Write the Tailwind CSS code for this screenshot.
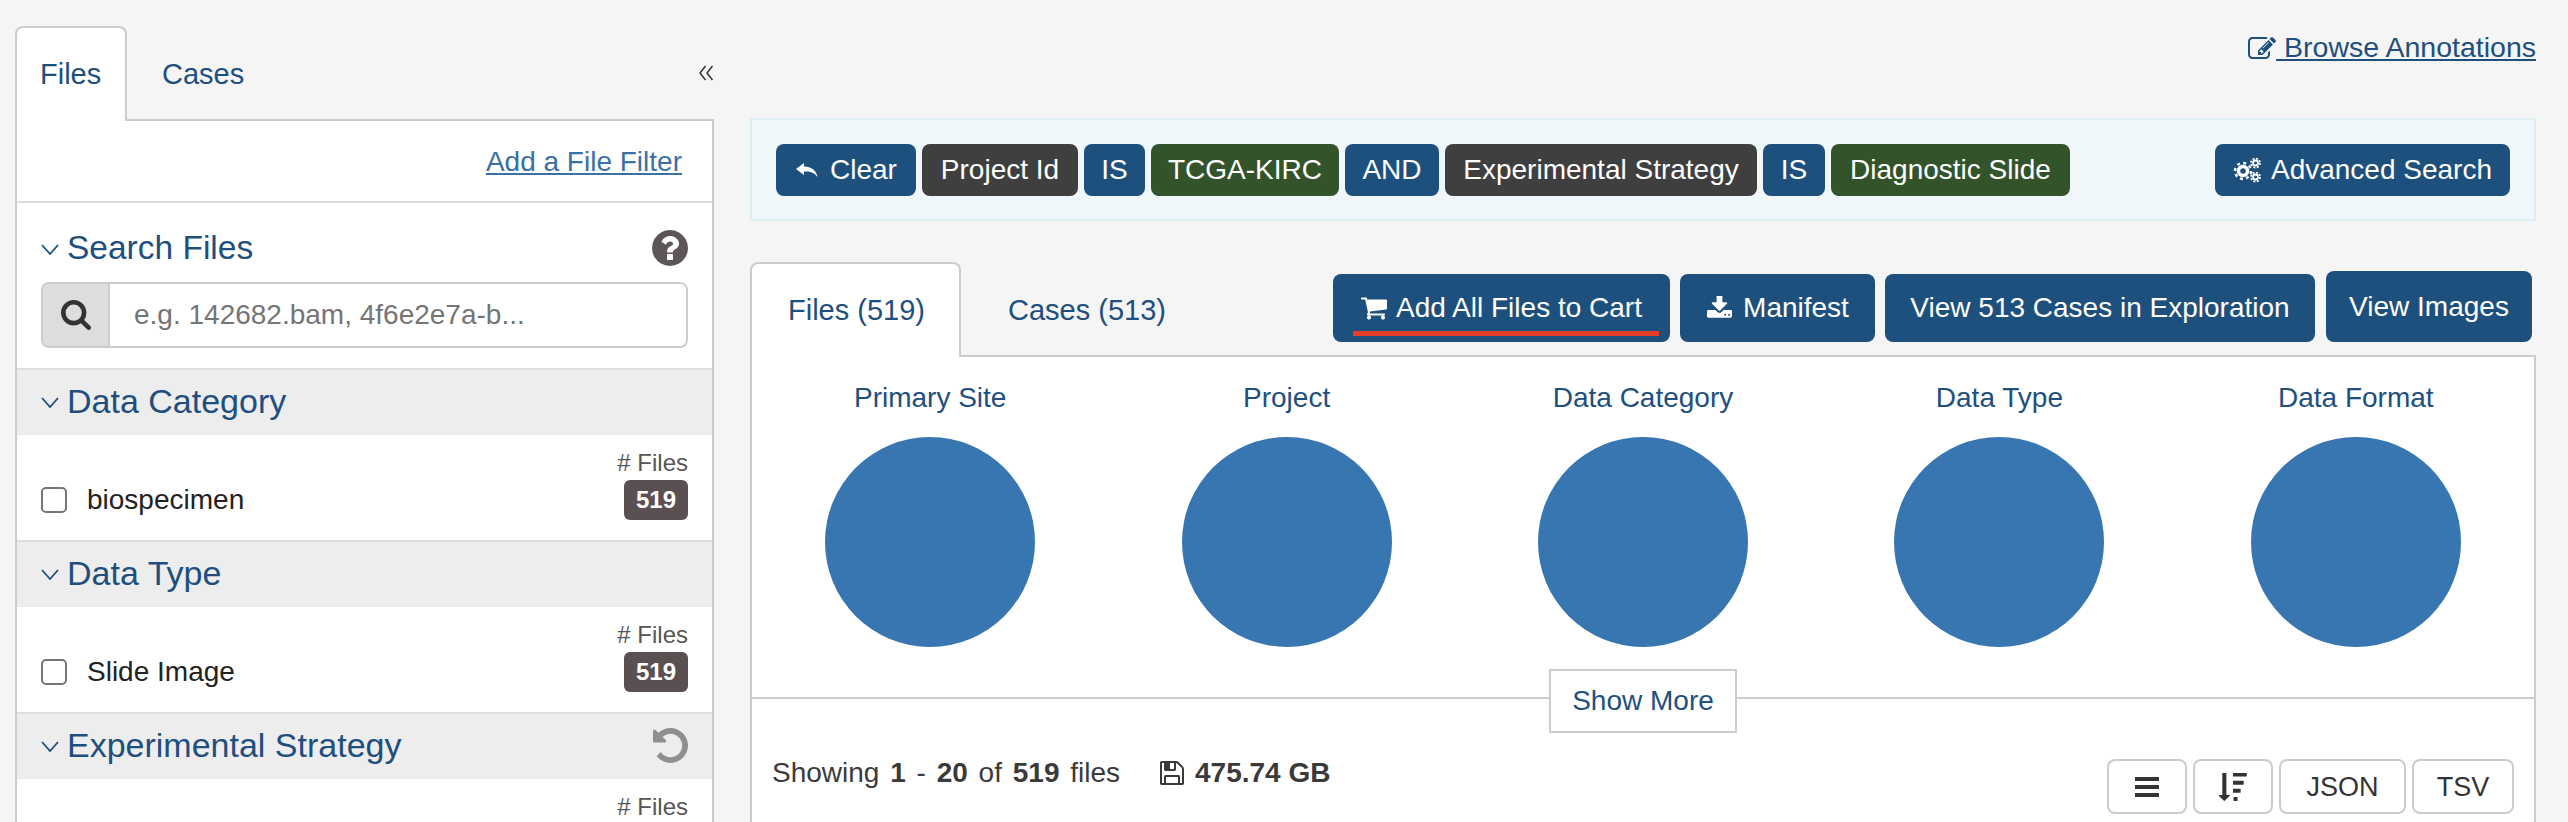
<!DOCTYPE html>
<html lang="en">
<head>
<meta charset="UTF-8">
<title>Repository</title>
<script src="https://cdn.jsdelivr.net/npm/@tailwindcss/browser@4"></script>
</head>
<body class="bg-[#f5f5f5] font-['Liberation_Sans',Arial,sans-serif] text-[28px] leading-[40px] text-[#333]">
<div class="flex h-[822px] w-[2568px] overflow-hidden">

  <!-- filters column -->
  <aside class="ml-[15px] mt-[26px] w-[699px] shrink-0">
    <div class="flex h-[95px] items-start text-[29px] text-[#1e4f7e]">
      <div class="relative z-10 h-[95px] w-[112px] rounded-t-lg border-2 border-b-0 border-[#ccc] bg-white pl-[23px] pt-[26px]">Files</div>
      <div class="pl-[35px] pt-[28px]">Cases</div>
      <svg class="ml-auto mt-[39px] h-[16px] w-[16px] text-[#333]" viewBox="0 0 16 16" fill="none" stroke="currentColor" stroke-width="1.500"><path d="M7.500 1 2 8 7.500 15M14.500 1 9 8 14.500 15"/></svg>
    </div>
    <div class="-mt-[2px] h-[720px] border-2 border-[#ccc] bg-white">
      <div class="flex h-[82px] justify-end border-b-2 border-[#ddd] pr-[30px] pt-[21px]">
        <a class="text-[#3a70a6] underline">Add a File Filter</a>
      </div>

      <section class="h-[165px] px-[24px] pt-[25px]">
        <div class="flex h-[40px] items-center">
          <svg class="mr-[8px] mt-[2px] h-[11px] w-[18px] text-[#1e4f7e]" viewBox="0 0 18 11" fill="none" stroke="currentColor" stroke-width="1.800"><path d="M1 1 9 10 17 1"/></svg>
          <h2 class="text-[33.500px] text-[#1e4f7e]">Search Files</h2>
          <svg class="ml-auto h-[36px] w-[36px] text-[#5d5557]" viewBox="128 128 1536 1536" fill="currentColor"><path d="M1024 1376v-192q0-14-9-23t-23-9h-192q-14 0-23 9t-9 23v192q0 14 9 23t23 9h192q14 0 23-9t9-23zm256-672q0-88-55.500-163t-138.500-116-170-41q-243 0-371 213-15 24 8 42l132 100q7 6 19 6 16 0 25-12 53-68 86-92 34-24 86-24 48 0 85.500 26t37.500 59q0 38-20 61t-68 45q-63 28-115.500 86.500t-52.500 125.500v36q0 14 9 23t23 9h192q14 0 23-9t9-23q0-19 21.500-49.500t54.500-49.500q32-18 49-28.500t46-35 44.500-48 28-60.500 12.500-81zm384 192q0 209-103 385.500t-279.500 279.500-385.500 103-385.500-103-279.500-279.500-103-385.500 103-385.500 279.500-279.500 385.500-103 385.500 103 279.500 279.500 103 385.500z"/></svg>
        </div>
        <div class="mt-[14px] flex h-[66px] overflow-hidden rounded-lg border-2 border-[#ccc]">
          <div class="flex w-[67px] items-center justify-center border-r-2 border-[#ccc] bg-[#ddd]">
            <svg class="h-[30px] w-[30px] text-[#333]" viewBox="64 128 1664 1664" fill="currentColor"><path d="M1216 832q0-185-131.500-316.500t-316.500-131.500-316.500 131.500-131.500 316.500 131.500 316.500 316.500 131.500 316.500-131.500 131.500-316.500zm512 832q0 52-38 90t-90 38q-54 0-90-38l-343-342q-179 124-399 124-143 0-273.500-55.500t-225-150-150-225-55.500-273.500 55.500-273.500 150-225 225-150 273.500-55.500 273.500 55.500 225 150 150 225 55.500 273.500q0 220-124 399l343 343q37 37 37 90z"/></svg>
          </div>
          <div class="flex flex-1 items-center bg-white pl-[24px] text-[#757575]">e.g. 142682.bam, 4f6e2e7a-b...</div>
        </div>
      </section>

      <section>
        <div class="flex h-[67px] items-center border-t-2 border-[#ddd] bg-[#ededed] px-[24px] pb-[3px]">
          <svg class="mr-[8px] mt-[2px] h-[11px] w-[18px] text-[#1e4f7e]" viewBox="0 0 18 11" fill="none" stroke="currentColor" stroke-width="1.800"><path d="M1 1 9 10 17 1"/></svg>
          <h2 class="text-[34px] text-[#1e4f7e]">Data Category</h2>
        </div>
        <div class="h-[105px] px-[24px] pt-[14px]">
          <div class="text-right text-[24px] leading-[28px] text-[#555]"># Files</div>
          <div class="mt-[3px] flex items-center">
            <input type="checkbox" class="h-[26px] w-[26px] appearance-none rounded-[5px] border-2 border-[#767676] bg-white">
            <span class="ml-[20px] text-[#222]">biospecimen</span>
            <span class="ml-auto flex h-[40px] w-[64px] items-center justify-center rounded-md bg-[#5a5051] text-[24px] font-bold text-white">519</span>
          </div>
        </div>
      </section>

      <section>
        <div class="flex h-[67px] items-center border-t-2 border-[#ddd] bg-[#ededed] px-[24px] pb-[3px]">
          <svg class="mr-[8px] mt-[2px] h-[11px] w-[18px] text-[#1e4f7e]" viewBox="0 0 18 11" fill="none" stroke="currentColor" stroke-width="1.800"><path d="M1 1 9 10 17 1"/></svg>
          <h2 class="text-[34px] text-[#1e4f7e]">Data Type</h2>
        </div>
        <div class="h-[105px] px-[24px] pt-[14px]">
          <div class="text-right text-[24px] leading-[28px] text-[#555]"># Files</div>
          <div class="mt-[3px] flex items-center">
            <input type="checkbox" class="h-[26px] w-[26px] appearance-none rounded-[5px] border-2 border-[#767676] bg-white">
            <span class="ml-[20px] text-[#222]">Slide Image</span>
            <span class="ml-auto flex h-[40px] w-[64px] items-center justify-center rounded-md bg-[#5a5051] text-[24px] font-bold text-white">519</span>
          </div>
        </div>
      </section>

      <section>
        <div class="flex h-[67px] items-center border-t-2 border-[#ddd] bg-[#ededed] px-[24px] pb-[3px]">
          <svg class="mr-[8px] mt-[2px] h-[11px] w-[18px] text-[#1e4f7e]" viewBox="0 0 18 11" fill="none" stroke="currentColor" stroke-width="1.800"><path d="M1 1 9 10 17 1"/></svg>
          <h2 class="text-[34px] text-[#1e4f7e]">Experimental Strategy</h2>
          <svg class="ml-auto h-[35px] w-[35px] text-[#8f8f8f]" viewBox="128 128 1536 1536" fill="currentColor"><path d="M1664 896q0 156-61 298t-164 245-245 164-298 61q-172 0-327-72.500t-264-204.500q-7-10-6.500-22.500t8.500-20.500l137-138q10-9 25-9 16 2 23 12 73 95 179 147t225 52q104 0 198.500-40.500t163.500-109.500 109.500-163.500 40.500-198.500-40.500-198.500-109.500-163.500-163.500-109.500-198.500-40.500q-98 0-188 35.500t-160 101.500l137 138q31 30 14 69-17 40-59 40h-448q-26 0-45-19t-19-45v-448q0-42 40-59 39-17 69 14l130 129q107-101 244.500-156.500t284.500-55.500q156 0 298 61t245 164 164 245 61 298z"/></svg>
        </div>
        <div class="px-[24px] pt-[14px]">
          <div class="text-right text-[24px] leading-[28px] text-[#555]"># Files</div>
        </div>
      </section>
    </div>
  </aside>

  <!-- results column -->
  <main class="ml-[36px] w-[1786px] shrink-0">
    <div class="flex h-[118px] justify-end pt-[27px]">
      <a class="text-[28.500px] text-[#1e4f7e] underline"><svg class="inline-block h-[22px] w-[28px] align-[-2px]" viewBox="0 128 1792 1408" fill="currentColor"><path d="M888 1184l116-116-152-152-116 116v56h96v96h56zm440-720q-16-16-33 1l-350 350q-17 17-1 33t33-1l350-350q17-17 1-33zm80 594v190q0 119-84.500 203.500t-203.500 84.500h-832q-119 0-203.500-84.500t-84.500-203.500v-832q0-119 84.500-203.500t203.500-84.500h832q63 0 117 25 15 7 18 23 3 17-9 29l-49 49q-14 14-32 8-23-6-45-6h-832q-66 0-113 47t-47 113v832q0 66 47 113t113 47h832q66 0 113-47t47-113v-126q0-13 9-22l64-64q15-15 35-7t20 29zm-96-738l288 288-672 672h-288v-288zm444 132l-92 92-288-288 92-92q28-28 68-28t68 28l152 152q28 28 28 68t-28 68z"/></svg> Browse Annotations</a>
    </div>

    <div class="flex h-[103px] items-center gap-[6px] border-2 border-[#ddeef4] bg-[#eff7fb] px-[24px] text-white">
      <span class="flex h-[52px] w-[140px] items-center justify-center gap-[11px] rounded-lg bg-[#1e507e]">
        <svg class="h-[14px] w-[24px]" viewBox="0 0 24 14" fill="currentColor"><path d="M9 0 1 6 9 12V8.500C15 8 19 9.500 22.500 14 21.500 7.500 16 3.500 9 3.500Z"/></svg>Clear</span>
      <span class="flex h-[52px] w-[156px] items-center justify-center rounded-lg bg-[#3f3f3f]">Project Id</span>
      <span class="flex h-[52px] w-[61px] items-center justify-center rounded-lg bg-[#1e507e]">IS</span>
      <span class="flex h-[52px] w-[188px] items-center justify-center rounded-lg bg-[#33542b]">TCGA-KIRC</span>
      <span class="flex h-[52px] w-[94px] items-center justify-center rounded-lg bg-[#1e507e]">AND</span>
      <span class="flex h-[52px] w-[312px] items-center justify-center rounded-lg bg-[#3f3f3f]">Experimental Strategy</span>
      <span class="flex h-[52px] w-[62px] items-center justify-center rounded-lg bg-[#1e507e]">IS</span>
      <span class="flex h-[52px] w-[239px] items-center justify-center rounded-lg bg-[#33542b]">Diagnostic Slide</span>
      <span class="ml-auto flex h-[52px] w-[295px] items-center justify-center gap-[10px] rounded-lg bg-[#1e507e]">
        <svg class="h-[26px] w-[28px]" viewBox="0 0 28 26" fill="none" stroke="currentColor">
          <circle cx="10" cy="14" r="4.500" stroke-width="3.500"/>
          <circle cx="10" cy="14" r="8" stroke-width="2.500" stroke-dasharray="3 3.280"/>
          <circle cx="22.500" cy="6" r="2.500" stroke-width="1.800"/>
          <circle cx="22.500" cy="6" r="4.500" stroke-width="1.800" stroke-dasharray="2 1.530"/>
          <circle cx="22.500" cy="20" r="2.500" stroke-width="1.800"/>
          <circle cx="22.500" cy="20" r="4.500" stroke-width="1.800" stroke-dasharray="2 1.530"/>
        </svg>Advanced Search</span>
    </div>

    <div class="mt-[41px] flex h-[95px] items-start text-[29px] text-[#1e4f7e]">
      <div class="relative z-10 h-[95px] w-[211px] rounded-t-lg border-2 border-b-0 border-[#ccc] bg-white pl-[36px] pt-[26px]">Files (519)</div>
      <div class="pl-[47px] pt-[28px]">Cases (513)</div>
      <div class="ml-auto mr-[4px] flex items-end gap-[10px] pt-[9px] text-[28px] text-white">
        <span class="relative flex h-[68px] w-[337px] items-center justify-center gap-[9px] rounded-lg bg-[#1e507e]">
          <svg class="h-[26px] w-[26px]" viewBox="64 128 1664 1600" fill="currentColor"><path d="M704 1536q0 52-38 90t-90 38-90-38-38-90 38-90 90-38 90 38 38 90zm896 0q0 52-38 90t-90 38-90-38-38-90 38-90 90-38 90 38 38 90zm128-1088v512q0 24-16.500 42.500t-40.500 21.500l-1044 122q13 60 13 70 0 16-24 64h920q26 0 45 19t19 45-19 45-45 19h-1024q-26 0-45-19t-19-45q0-11 8-31.500t16-36 21.500-40 15.500-29.500l-177-823h-204q-26 0-45-19t-19-45 19-45 45-19h256q16 0 28.500 6.500t19.500 15.500 13 24.500 8 26 5.500 29.500 4.500 26h1201q26 0 45 19t19 45z"/></svg>Add All Files to Cart
          <span class="absolute bottom-[6px] left-[20px] h-[5px] w-[306px] bg-[#e63c28]"></span>
        </span>
        <span class="flex h-[68px] w-[195px] items-center justify-center gap-[11px] rounded-lg bg-[#1e507e]">
          <svg class="h-[24px] w-[26px]" viewBox="0 128 1728 1536" fill="currentColor"><path d="M1344 1344q0-26-19-45t-45-19-45 19-19 45 19 45 45 19 45-19 19-45zm256 0q0-26-19-45t-45-19-45 19-19 45 19 45 45 19 45-19 19-45zm128-224v320q0 40-28 68t-68 28h-1472q-40 0-68-28t-28-68v-320q0-40 28-68t68-28h465l135 136q58 56 136 56t136-56l136-136h464q40 0 68 28t28 68zm-325-569q17 41-14 70l-448 448q-18 19-45 19t-45-19l-448-448q-31-29-14-70 17-39 59-39h256v-448q0-26 19-45t45-19h256q26 0 45 19t19 45v448h256q42 0 59 39z"/></svg>Manifest</span>
        <span class="flex h-[68px] w-[430px] items-center justify-center rounded-lg bg-[#1e507e]">View 513 Cases in Exploration</span>
        <span class="ml-[1px] flex h-[71px] w-[206px] items-center justify-center rounded-lg bg-[#1e507e]">View Images</span>
      </div>
    </div>

    <div class="-mt-[2px] h-[470px] border-2 border-[#ccc] bg-white">
      <div class="relative h-[342px] border-b-2 border-[#ccc]">
        <div class="grid grid-cols-5 pt-[21px] text-center text-[#1e4f7e]">
          <div class="flex flex-col items-center gap-[19px]">Primary Site<div class="h-[210px] w-[210px] rounded-full bg-[#3776b0]"></div></div>
          <div class="flex flex-col items-center gap-[19px]">Project<div class="h-[210px] w-[210px] rounded-full bg-[#3776b0]"></div></div>
          <div class="flex flex-col items-center gap-[19px]">Data Category<div class="h-[210px] w-[210px] rounded-full bg-[#3776b0]"></div></div>
          <div class="flex flex-col items-center gap-[19px]">Data Type<div class="h-[210px] w-[210px] rounded-full bg-[#3776b0]"></div></div>
          <div class="flex flex-col items-center gap-[19px]">Data Format<div class="h-[210px] w-[210px] rounded-full bg-[#3776b0]"></div></div>
        </div>
        <div class="absolute left-1/2 top-[312px] flex h-[64px] w-[188px] -translate-x-1/2 items-center justify-center border-2 border-[#ccc] bg-white text-[#1e4f7e]">Show More</div>
      </div>

      <div class="flex items-start justify-between pl-[20px] pr-[20px]">
        <div class="flex items-center pt-[54px] text-[#3a3a3a]">
          <span class="whitespace-pre [word-spacing:3px]">Showing <b>1</b> - <b>20</b> of <b>519</b> files</span>
          <svg class="ml-[40px] mr-[11px] h-[24px] w-[24px]" viewBox="128 128 1536 1536" fill="currentColor"><path d="M512 1536h768v-384h-768v384zm896 0h128v-896q0-14-10-38.500t-20-34.500l-281-281q-10-10-34-20t-39-10v416q0 40-28 68t-68 28h-576q-40 0-68-28t-28-68v-416h-128v1280h128v-416q0-40 28-68t68-28h832q40 0 68 28t28 68v416zm-384-928v-320q0-13-9.500-22.500t-22.500-9.500h-192q-13 0-22.500 9.500t-9.500 22.500v320q0 13 9.500 22.500t22.500 9.500h192q13 0 22.500-9.500t9.500-22.500zm640 32v928q0 40-28 68t-68 28h-1344q-40 0-68-28t-28-68v-1344q0-40 28-68t68-28h928q40 0 88 20t76 48l280 280q28 28 48 76t20 88z"/></svg>
          <b>475.74 GB</b>
        </div>
        <div class="flex gap-[6px] pt-[60px] text-[27px] text-[#333]">
          <span class="flex h-[55px] w-[80px] items-center justify-center rounded-lg border-2 border-[#ccc]">
            <svg class="h-[20px] w-[24px]" viewBox="0 0 24 20" fill="currentColor"><rect width="24" height="4"/><rect y="8" width="24" height="4"/><rect y="16" width="24" height="4"/></svg>
          </span>
          <span class="flex h-[55px] w-[80px] items-center justify-center rounded-lg border-2 border-[#ccc]">
            <svg class="h-[28px] w-[28px]" viewBox="64 -32 1728 1760" fill="currentColor"><path d="M1216 1504v192q0 14-9 23t-23 9h-192q-14 0-23-9t-9-23v-192q0-14 9-23t23-9h192q14 0 23 9t9 23zm-480-128q0 12-10 24l-319 319q-10 9-23 9-12 0-23-9l-320-320q-15-16-7-35 8-20 30-20h192v-1376q0-14 9-23t23-9h192q14 0 23 9t9 23v1376h192q14 0 23 9t9 23zm672-384v192q0 14-9 23t-23 9h-416q-14 0-23-9t-9-23v-192q0-14 9-23t23-9h416q14 0 23 9t9 23zm192-512v192q0 14-9 23t-23 9h-608q-14 0-23-9t-9-23v-192q0-14 9-23t23-9h608q14 0 23 9t9 23zm192-512v192q0 14-9 23t-23 9h-800q-14 0-23-9t-9-23v-192q0-14 9-23t23-9h800q14 0 23 9t9 23z"/></svg>
          </span>
          <span class="flex h-[55px] w-[127px] items-center justify-center rounded-lg border-2 border-[#ccc]">JSON</span>
          <span class="flex h-[55px] w-[102px] items-center justify-center rounded-lg border-2 border-[#ccc]">TSV</span>
        </div>
      </div>
    </div>
  </main>

</div>
</body>
</html>
